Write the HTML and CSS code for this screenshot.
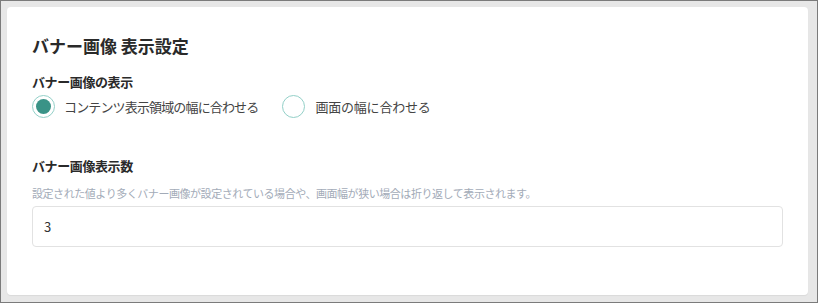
FILE: index.html
```html
<!DOCTYPE html>
<html lang="ja">
<head>
  <meta charset="UTF-8" />
  <title>バナー画像 表示設定</title>
  <link rel="stylesheet" href="styles.css">
</head>
<body>
  <div class="frame">
    <div class="card">
      <h2 class="title">バナー画像 表示設定</h2>

      <div class="field-label">バナー画像の表示</div>
      <div class="radio-group">
        <label class="radio">
          <input type="radio" name="width" checked />
          <span class="mark"></span>
          コンテンツ表示領域の幅に合わせる
        </label>
        <label class="radio wide">
          <input type="radio" name="width" />
          <span class="mark"></span>
          画面の幅に合わせる
        </label>
      </div>

      <div class="field-label count-label">バナー画像表示数</div>
      <div class="help">設定された値より多くバナー画像が設定されている場合や、画面幅が狭い場合は折り返して表示されます。</div>
      <input class="text-input" type="text" value="3" />
    </div>
  </div>
</body>
</html>
```

FILE: styles.css
```css
* {
  box-sizing: border-box;
}
body {
  margin: 0;
  font-family: "Noto Sans CJK JP", "Noto Sans", sans-serif;
  color: #333;
}
.frame {
  width: 818px;
  height: 303px;
  border: 1px solid #7b7b7b;
  background: #e7e7e7;
  padding: 6px 9px 7px 6px;
}
.card {
  height: 288px;
  background: #fff;
  border-radius: 4px;
  box-shadow: 0 1px 1px rgba(0, 0, 0, 0.06);
  padding: 27px 25px 0 25px;
}
.title {
  margin: 0;
  font-size: 17px;
  line-height: 24px;
  font-weight: bold;
  color: #2a2a2a;
}
.field-label {
  margin-top: 14px;
  font-size: 13px;
  line-height: 20px;
  font-weight: bold;
  color: #2a2a2a;
  letter-spacing: -0.4px;
}
.count-label {
  margin-top: 38px;
}
.radio-group {
  display: flex;
  gap: 24px;
  margin-top: 2px;
  height: 24px;
  align-items: center;
}
.radio {
  display: flex;
  align-items: center;
  gap: 9px;
  font-size: 13px;
  color: #444;
  letter-spacing: -0.85px;
  cursor: pointer;
}
.radio.wide {
  gap: 10px;
  letter-spacing: -0.2px;
}
.radio input {
  display: none;
}
.mark {
  width: 23px;
  height: 23px;
  border-radius: 50%;
  border: 1px solid #93d0c8;
  display: flex;
  align-items: center;
  justify-content: center;
}
.radio input:checked + .mark::after {
  content: "";
  width: 15px;
  height: 15px;
  border-radius: 50%;
  background: #3a9387;
}
.help {
  margin-top: 9px;
  font-size: 11px;
  line-height: 16px;
  color: #a3abb8;
  letter-spacing: -0.45px;
}
.text-input {
  display: block;
  margin-top: 5px;
  width: 100%;
  height: 41px;
  border: 1px solid #e2e2e2;
  border-radius: 4px;
  padding: 0 11px;
  font-family: inherit;
  font-size: 13px;
  color: #333;
  outline: none;
}
```
